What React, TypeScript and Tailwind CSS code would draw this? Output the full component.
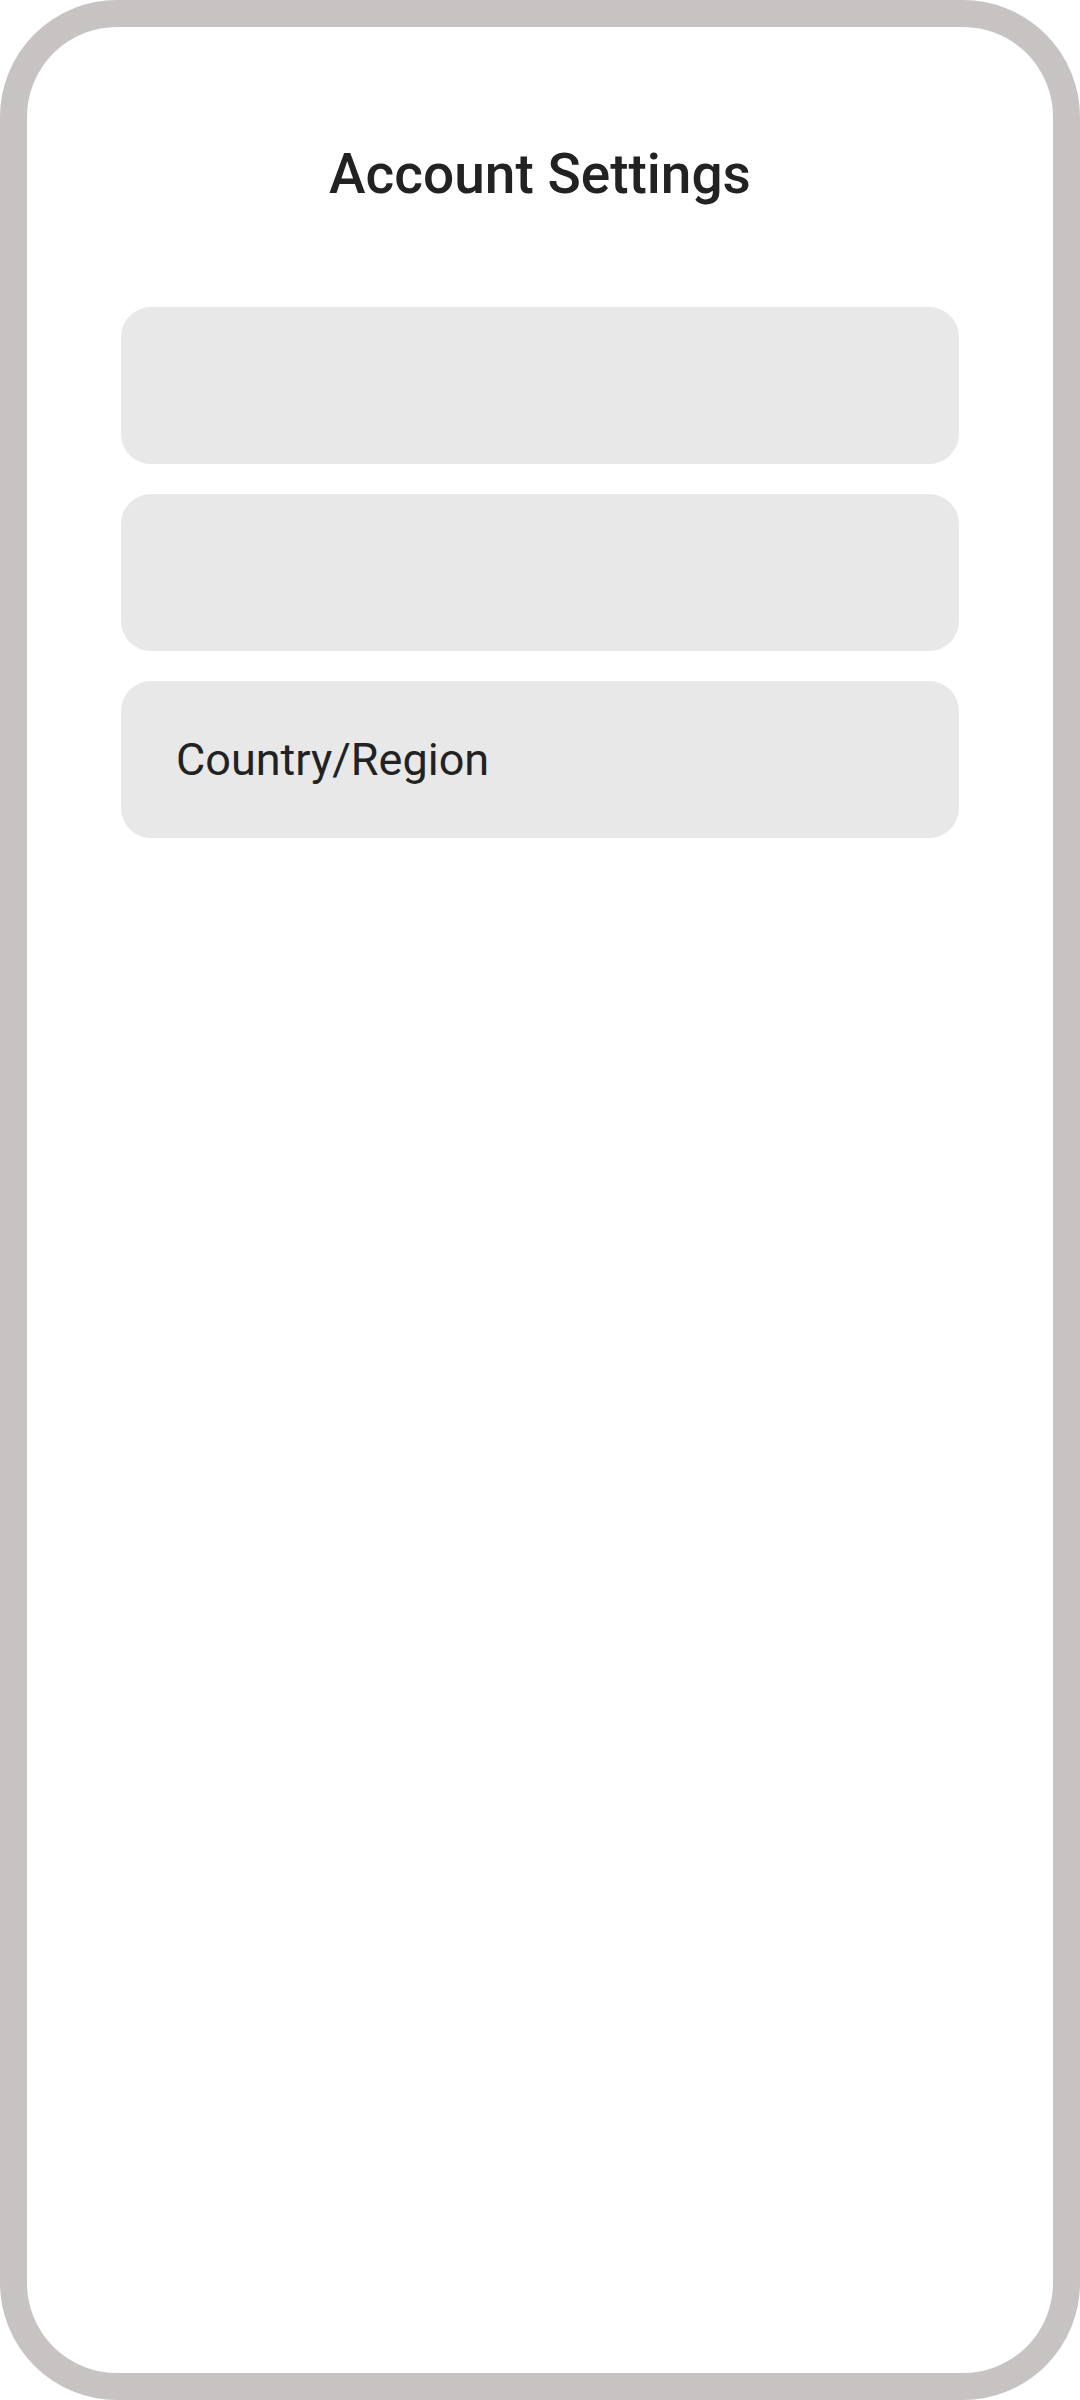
export default function App() {
  const rows = ['', '', 'Country/Region']

  return (
    <div className="w-[1080px] h-[2400px] bg-white">
      <div className="h-full rounded-[117px] border-[27px] border-[#c6c3c2] bg-white flex flex-col items-center font-['Roboto',sans-serif]">
        <h1 className="mt-[112px] text-[55px] leading-[70px] font-medium text-[#222222]">
          Account Settings
        </h1>

        <div className="mt-[98px] w-[838px] flex flex-col gap-[30px]">
          {rows.map((label, i) => (
            <div
              key={i}
              className="h-[157px] rounded-[30px] bg-[#e8e8e8] flex items-center pl-[55px]"
            >
              {label && <span className="text-[45px] text-[#222222]">{label}</span>}
            </div>
          ))}
        </div>
      </div>
    </div>
  )
}
